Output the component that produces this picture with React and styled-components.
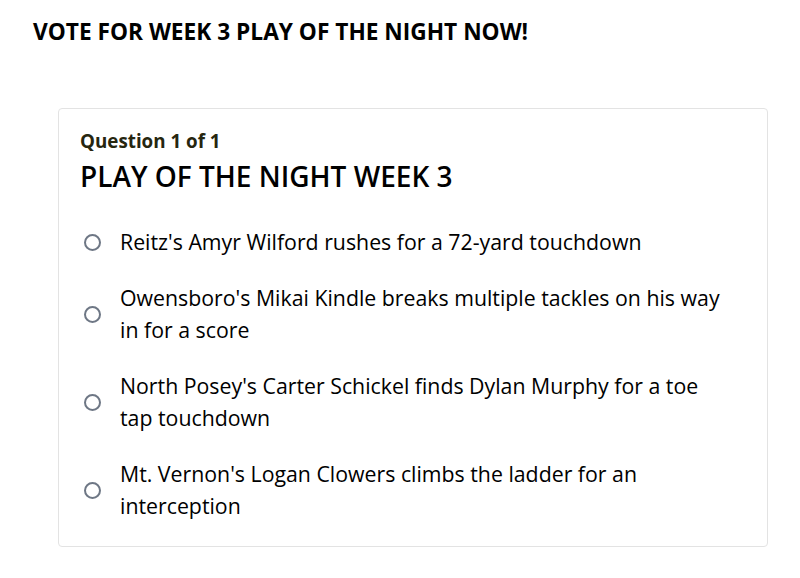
import React from "react";
import styled, { createGlobalStyle } from "styled-components";

const Global = createGlobalStyle`
  html, body { margin: 0; padding: 0; background: #fff; }
  body { font-family: "Open Sans", "Liberation Sans", sans-serif; color: #000; }
`;

const Page = styled.div`
  padding: 17px 32px 30px 33px;
`;

const Title = styled.h1`
  margin: 0;
  font-size: 22.7px;
  font-weight: 700;
  line-height: 30px;
  color: #000;
`;

const Card = styled.div`
  margin: 61px 0 0 25px;
  width: 710px;
  box-sizing: border-box;
  border: 1px solid #e3e3e3;
  border-radius: 4px;
  padding: 18px 21px 24px 21px;
`;

const QuestionCount = styled.div`
  font-size: 18.8px;
  font-weight: 700;
  line-height: 28px;
  color: #26260f;
`;

const QuestionTitle = styled.h2`
  margin: 4px 0 33px;
  font-size: 28px;
  font-weight: 600;
  line-height: 34px;
  color: #000;
`;

const Options = styled.div`
  display: flex;
  flex-direction: column;
  gap: 24px;
`;

const Option = styled.label`
  display: flex;
  align-items: center;
  gap: 19px;
  padding-left: 4px;
  cursor: pointer;
`;

const Radio = styled.span`
  flex: none;
  width: 17px;
  height: 17px;
  box-sizing: border-box;
  border: 2.5px solid #6e7785;
  border-radius: 50%;
`;

const OptionText = styled.span`
  font-size: 21.3px;
  line-height: 32px;
  color: #000;
  max-width: 610px;
`;

const options = [
  "Reitz's Amyr Wilford rushes for a 72-yard touchdown",
  "Owensboro's Mikai Kindle breaks multiple tackles on his way in for a score",
  "North Posey's Carter Schickel finds Dylan Murphy for a toe tap touchdown",
  "Mt. Vernon's Logan Clowers climbs the ladder for an interception",
];

export default function App() {
  return (
    <>
      <Global />
      <Page>
        <Title>VOTE FOR WEEK 3 PLAY OF THE NIGHT NOW!</Title>
        <Card>
          <QuestionCount>Question 1 of 1</QuestionCount>
          <QuestionTitle>PLAY OF THE NIGHT WEEK 3</QuestionTitle>
          <Options>
            {options.map((o) => (
              <Option key={o}>
                <Radio />
                <OptionText>{o}</OptionText>
              </Option>
            ))}
          </Options>
        </Card>
      </Page>
    </>
  );
}
